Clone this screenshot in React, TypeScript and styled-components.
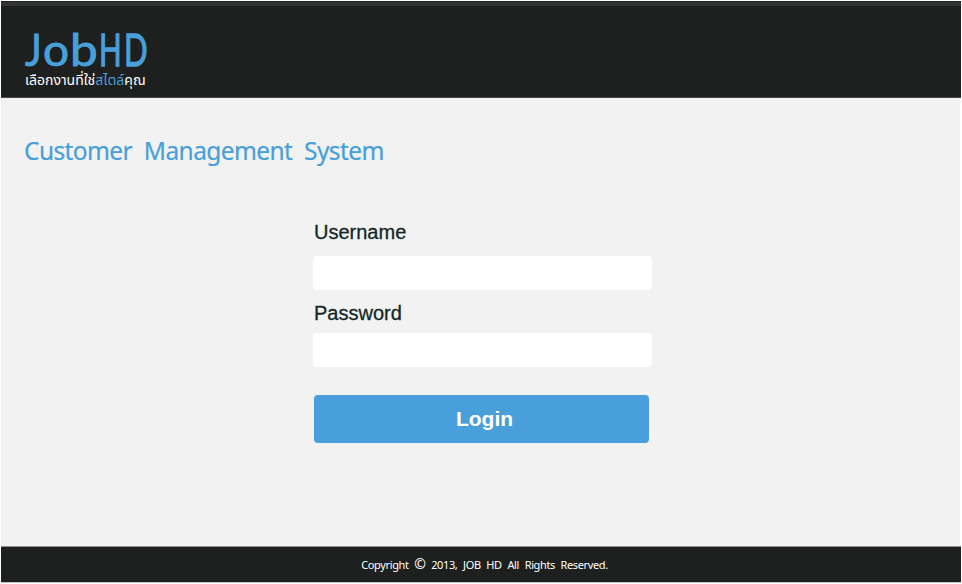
import React from "react";
import styled, { createGlobalStyle } from "styled-components";

const Global = createGlobalStyle`
  * { box-sizing: border-box; }
  body { margin: 0; background: #fff; }
`;
const Page = styled.div`
  width: 962px;
  height: 584px;
  padding: 1px;
  display: flex;
  flex-direction: column;
  overflow: hidden;
  background: #fff;
`;
const Header = styled.header`
  height: 97px;
  flex: none;
  background: #1e201f;
  border-top: 1px solid #1e201f;
  border-bottom: 1px solid #484a49;
  box-shadow: inset 0 4px #333534;
  padding: 23px 0 0 24px;
`;
const Logo = styled.div`
  display: flex;
  height: 47px;
  color: #489fd9;
  font: 400 45px/49px Lato, sans-serif;
`;
const Glyph = styled.span<{ $w: number; $s?: number; $stroke?: number }>`
  width: ${(p) => p.$w}px;
  transform: scaleX(${(p) => p.$s ?? 1});
  transform-origin: 0 50%;
  -webkit-text-stroke: ${(p) => p.$stroke ?? 0.9}px #489fd9;
`;
const Tagline = styled.div`
  width: max-content;
  white-space: nowrap;
  color: #fff;
  font: 14px/18px "Noto Sans Thai", "Noto Sans", sans-serif;
`;
const Accent = styled.span`
  color: #489fd9;
`;
const Main = styled.main`
  flex: 1;
  margin-right: 1px;
  background: #f2f2f2;
  padding: 35px 0 0 24px;
`;
const Title = styled.h1`
  margin: 0 0 0 -1px;
  height: 84px;
  color: #489fd9;
  white-space: nowrap;
  font: 400 24.5px/36px "Noto Sans", sans-serif;
  letter-spacing: -0.6px;
  word-spacing: 6px;
  -webkit-text-stroke: 0.2px #489fd9;
`;
const Form = styled.form`
  width: 339px;
  margin-left: 288px;
  display: flex;
  flex-direction: column;
`;
const Label = styled.label<{ $gap: number }>`
  display: block;
  height: ${(p) => p.$gap}px;
  padding-left: 1px;
  color: #142826;
  font: 400 20px/30px "Liberation Sans", sans-serif;
  -webkit-text-stroke: 0.3px #142826;
`;
const Field = styled.input`
  display: block;
  width: 339px;
  height: 34px;
  border: 0;
  border-radius: 4px;
  background: #fff;
  padding: 0 10px;
  outline: none;
  margin-bottom: 8px;
`;
const Button = styled.button`
  width: 335px;
  height: 48px;
  margin: 20px 0 0 1px;
  border: 0;
  border-radius: 4px;
  background: #489fd9;
  color: #fff;
  padding: 0 0 0 6px;
  font: 700 21px/48px "Liberation Sans", sans-serif;
`;
const Footer = styled.footer`
  height: 37px;
  flex: none;
  background: #1e201f;
  border-top: 1px solid #8b8e8d;
  border-bottom: 1px solid #c4c5c5;
  color: #fff;
  padding-left: 7px;
  text-align: center;
  font: 11px/35px "Noto Sans", sans-serif;
  letter-spacing: -0.38px;
  word-spacing: 3.2px;
`;
const Copy = styled.span`
  font-size: 14px;
  line-height: 1;
`;

export default function App() {
  return (
    <>
      <Global />
      <Page>
        <Header>
          <Logo>
            <Glyph $w={17.5} $s={0.88}>J</Glyph>
            <Glyph $w={27.5} $s={1.02}>o</Glyph>
            <Glyph $w={29} $s={1.1}>b</Glyph>
            <Glyph $w={25} $s={0.66} $stroke={1.3}>H</Glyph>
            <Glyph $w={24} $s={0.69} $stroke={1.3}>D</Glyph>
          </Logo>
          <Tagline>
            เลือกงานที่ใช่<Accent>สไตล์</Accent>คุณ
          </Tagline>
        </Header>
        <Main>
          <Title>Customer Management System</Title>
          <Form onSubmit={(e) => e.preventDefault()}>
            <Label htmlFor="username" $gap={39}>Username</Label>
            <Field id="username" />
            <Label htmlFor="password" $gap={35}>Password</Label>
            <Field id="password" type="password" />
            <Button type="submit">Login</Button>
          </Form>
        </Main>
        <Footer>
          Copyright <Copy>©</Copy> 2013, JOB HD All Rights Reserved.
        </Footer>
      </Page>
    </>
  );
}
